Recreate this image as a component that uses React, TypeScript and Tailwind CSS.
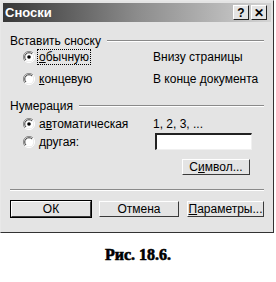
import React from 'react';

const ui = { fontFamily: '"Liberation Sans", Arial, sans-serif' };

function Radio({ checked }: { checked?: boolean }) {
  return (
    <svg width="12" height="12" viewBox="0 0 12 12" className="shrink-0">
      <path d="M10 2 A5.5 5.5 0 0 0 2 10" fill="none" stroke="#8a8a8a" strokeWidth="1" />
      <path d="M10 2 A5.5 5.5 0 0 1 2 10" fill="none" stroke="#ffffff" strokeWidth="1" />
      <circle cx="6" cy="6" r="4.5" fill="#ffffff" />
      <path d="M9 3 A4.2 4.2 0 0 0 3 9" fill="none" stroke="#3a3a3a" strokeWidth="1" />
      {checked && <circle cx="6" cy="6" r="1.8" fill="#000" />}
    </svg>
  );
}

function Btn({ children, w, bold }: { children: React.ReactNode; w: string; bold?: boolean }) {
  return (
    <div className={`${w} h-[18px] flex text-[12px] text-black bg-[#e4e4e4] border ${bold ? 'border-black' : 'border-transparent'}`}>
      <div className="w-full h-full flex items-center justify-center border-t border-l border-t-white border-l-white border-r border-b border-r-[#3a3a3a] border-b-[#3a3a3a]">
        <span className="leading-[12px] pb-[1px]">{children}</span>
      </div>
    </div>
  );
}

function Group({ title }: { title: string }) {
  return (
    <div className="flex items-center h-[14px]">
      <span className="text-[12px] text-black whitespace-nowrap">{title}</span>
      <div className="flex-1 ml-[6px] mr-[5px] h-[2px] border-t border-t-[#8a8a8a] border-b border-b-white" />
    </div>
  );
}

export default function App() {
  return (
    <div className="w-[276px] h-[282px] bg-white relative overflow-hidden" style={ui}>
      <div className="w-[274px] h-[233px] bg-[#e4e4e4] border-l border-t border-l-[#e8e8e8] border-t-[#e8e8e8] border-r border-b border-r-[#333] border-b-[#333] p-[2px] flex flex-col">
        {/* title bar */}
        <div className="h-[19px] flex items-center pl-[2px] pr-[4px] bg-gradient-to-r from-[#383838] via-[#8c8c8c] to-[#d4d4d4]">
          <span className="text-white font-bold text-[13px]">Сноски</span>
          <div className="ml-auto flex gap-[2px]">
            <div className="w-[16px] h-[15px] bg-[#e4e4e4] flex items-center justify-center text-[12px] font-bold leading-none border-t border-l border-t-white border-l-white border-r border-b border-r-[#222] border-b-[#222]">?</div>
            <div className="w-[16px] h-[15px] bg-[#e4e4e4] flex items-center justify-center text-[12px] font-bold leading-none border-t border-l border-t-white border-l-white border-r border-b border-r-[#222] border-b-[#222]">✕</div>
          </div>
        </div>

        <div className="flex flex-col pl-[7px] pr-[2px] pt-[12px]">
          <Group title="Вставить сноску" />
          <div className="flex items-center h-[17px] mt-[0px] pl-[13px] text-[12px] text-black">
            <Radio checked />
            <span className="ml-[3px] w-[115px]">
              <span className="outline outline-1 outline-dotted outline-black px-[1px]"><u>о</u>бычную</span>
            </span>
            <span>Внизу страницы</span>
          </div>
          <div className="flex items-center h-[17px] mt-[5px] pl-[13px] text-[12px] text-black">
            <Radio />
            <span className="ml-[4px] w-[114px]"><u>к</u>онцевую</span>
            <span>В конце документа</span>
          </div>

          <div className="mt-[12px]">
            <Group title="Нумерация" />
          </div>
          <div className="flex items-center h-[17px] mt-[2px] pl-[13px] text-[12px] text-black">
            <Radio checked />
            <span className="ml-[4px] w-[114px]">а<u>в</u>томатическая</span>
            <span>1, 2, 3, ...</span>
          </div>
          <div className="flex items-center h-[17px] mt-[1px] pl-[13px] text-[12px] text-black">
            <Radio />
            <span className="ml-[4px] w-[116px]"><u>д</u>ругая:</span>
            <div className="w-[97px] h-[17px] bg-white border-t-2 border-l-2 border-t-[#222] border-l-[#222] border-r border-b border-r-[#f0f0f0] border-b-[#f0f0f0]" />
          </div>
          <div className="flex justify-end pr-[18px] mt-[8px]">
            <Btn w="w-[70px]">С<u>и</u>мвол...</Btn>
          </div>
          <div className="mt-[13px] mr-[5px] h-[2px] border-t border-t-[#8a8a8a] border-b border-b-white" />
          <div className="flex gap-[6px] mt-[9px]">
            <Btn w="w-[82px]" bold>ОК</Btn>
            <Btn w="w-[82px]">Отмена</Btn>
            <Btn w="w-[79px]"><u>П</u>араметры...</Btn>
          </div>
        </div>
      </div>
      <div className="text-center mt-[10px] text-[16px] font-bold text-black [-webkit-text-stroke:0.6px_black]" style={{ fontFamily: '"Liberation Serif", "Times New Roman", serif' }}>
        Рис. 18.6.
      </div>
    </div>
  );
}
